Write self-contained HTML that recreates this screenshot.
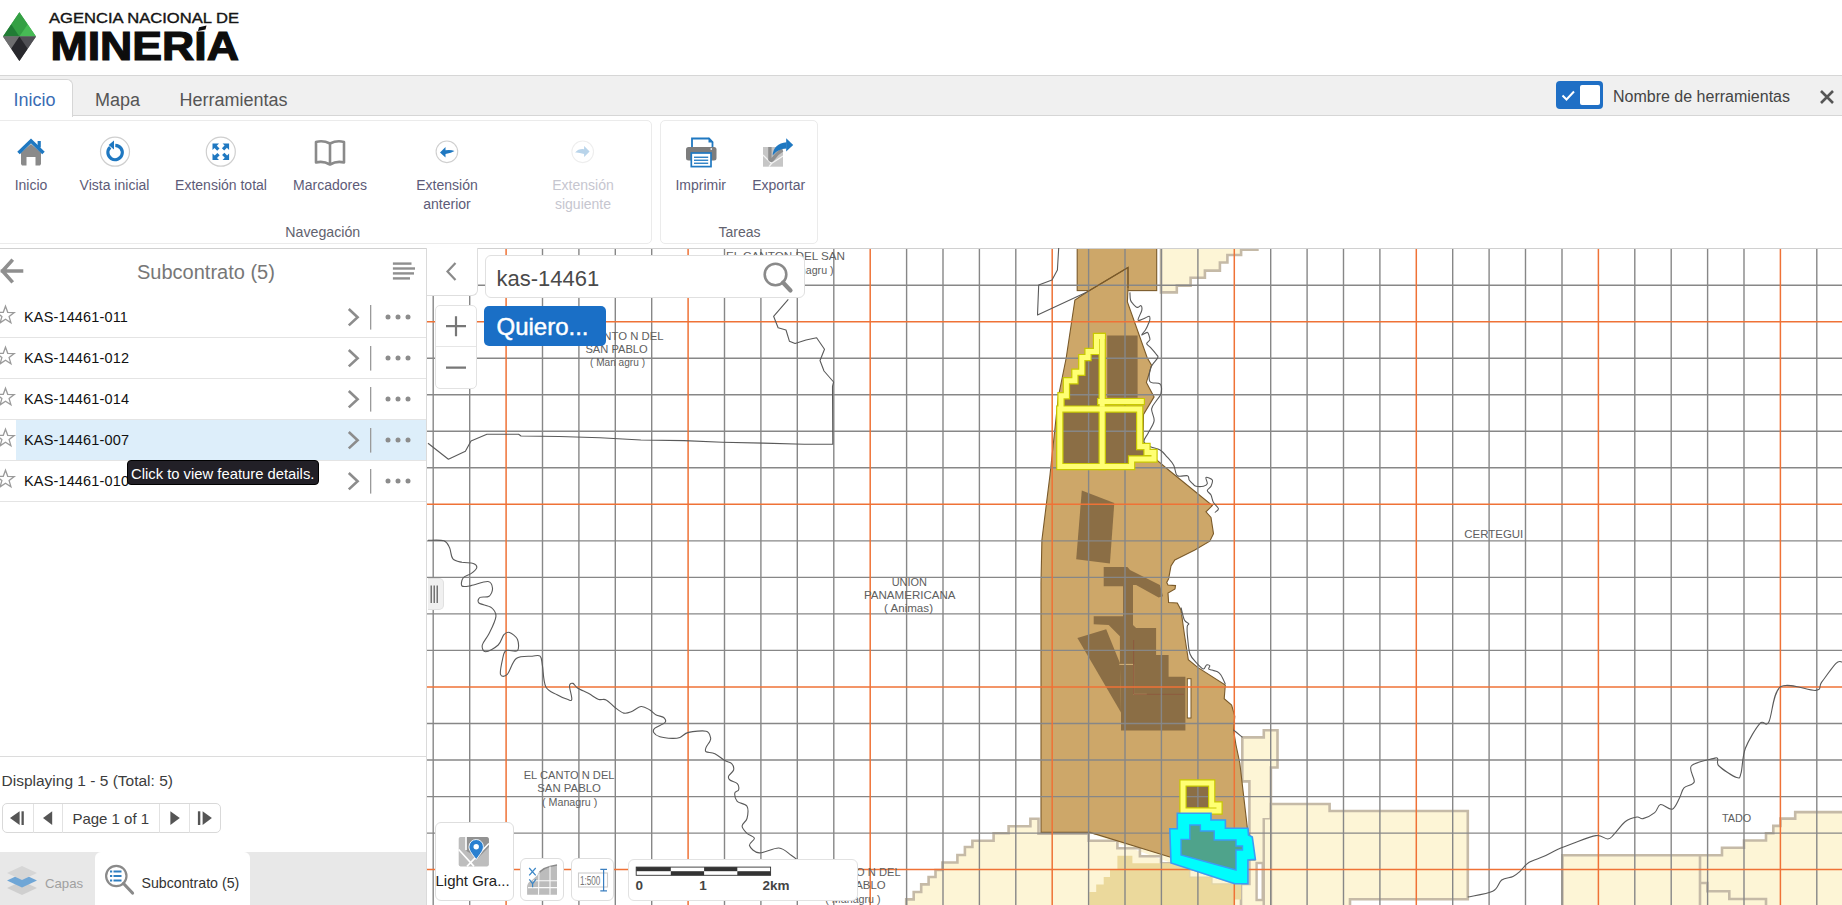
<!DOCTYPE html>
<html><head><meta charset="utf-8"><title>ANM</title>
<style>
*{box-sizing:border-box;margin:0;padding:0}
html,body{width:1842px;height:905px;overflow:hidden;background:#fff;font-family:"Liberation Sans",sans-serif;}
.abs{position:absolute}
.t{position:absolute;white-space:nowrap;line-height:1}
#tabbar{position:absolute;left:0;top:75px;width:1842px;height:41px;background:#f0f0f0;border-top:1px solid #d6d6d6;border-bottom:1px solid #d6d6d6}
.grp{position:absolute;top:120px;height:124px;border:1px solid #ebebeb;border-radius:5px;background:#fff}
.rl{position:absolute;white-space:nowrap;line-height:18px;font-size:14px;color:#5b5a72;text-align:center}
.row{position:absolute;left:0;width:426px;height:41px;border-bottom:1px solid #e6e6e6}
.kas{position:absolute;left:24px;top:12px;font-size:14.5px;color:#111;line-height:1;white-space:nowrap}
.wid{position:absolute;background:#fff;border:1px solid #dcdcdc;border-radius:6px}
</style></head><body>

<svg class="abs" style="left:0;top:0" width="260" height="75" viewBox="0 0 260 75">
<polygon points="19.4,12.2 3,36.4 36,36.4" fill="#36a346"/>
<polygon points="19.4,12.2 11.2,24.3 19.4,36.4 27.7,24.3" fill="#34a044"/>
<polygon points="3,36.4 11.2,24.3 19.4,36.4" fill="#217c35"/>
<polygon points="27.7,24.3 36,36.4 19.4,36.4" fill="#47bb55"/>
<polygon points="3,36.4 36,36.4 19.4,61" fill="#5a5a5a"/>
<polygon points="3,36.4 19.4,36.4 11.2,48.7" fill="#6e6e70"/>
<polygon points="19.4,36.4 36,36.4 27.7,48.7" fill="#4f4f54"/>
<polygon points="19.4,36.4 27.7,48.7 19.4,61 11.2,48.7" fill="#28282d"/>
<text x="49" y="22.8" font-family="Liberation Sans" font-weight="normal" font-size="14" fill="#141414" stroke="#141414" stroke-width="0.35" textLength="190" lengthAdjust="spacingAndGlyphs">AGENCIA NACIONAL DE</text>
<text x="50.5" y="60.4" font-family="Liberation Sans" font-weight="bold" font-size="40" fill="#0d0d0d" stroke="#0d0d0d" stroke-width="1.2" textLength="188.5" lengthAdjust="spacingAndGlyphs">MINERIA</text>
<polygon points="199,27.2 206.5,25.6 205.5,29.6 198,31" fill="#0d0d0d"/>
</svg>
<div id="tabbar"></div>
<div class="abs" style="left:0;top:79px;width:73px;height:38px;background:#fff;border-top:1px solid #d6d6d6;border-right:1px solid #d6d6d6;border-top-right-radius:6px"></div>
<div class="t" style="left:13.5px;top:91.3px;font-size:18px;color:#3a6cb4;font-weight:400;">Inicio</div>
<div class="t" style="left:95.0px;top:91.3px;font-size:18px;color:#555;font-weight:400;">Mapa</div>
<div class="t" style="left:179.5px;top:91.3px;font-size:18px;color:#555;font-weight:400;">Herramientas</div>
<div class="abs" style="left:1556px;top:81px;width:47px;height:28px;background:#1f6fc5;border-radius:4px"></div>
<div class="abs" style="left:1580px;top:85px;width:20px;height:20px;background:#fff;border-radius:2px"></div>
<svg class="abs" style="left:1556px;top:81px" width="26" height="28"><polyline points="6.5,14.5 10.5,18.5 18,10.5" fill="none" stroke="#fff" stroke-width="2"/></svg>
<div class="t" style="left:1613.0px;top:88.5px;font-size:16px;color:#444;font-weight:400;">Nombre de herramientas</div>
<svg class="abs" style="left:1818px;top:88px" width="18" height="18"><path d="M3,3 L15,15 M15,3 L3,15" stroke="#555" stroke-width="2.6"/></svg>
<div class="grp" style="left:-5px;width:657px"></div>
<div class="grp" style="left:660px;width:158px"></div>
<div class="abs" style="left:0;top:248px;width:1842px;height:1px;background:#d0d0d0"></div>
<svg class="abs" style="left:0;top:120px" width="830" height="60" viewBox="0 120 830 60">
<polygon points="21,152.5 31,144 41,152.5 41,164 40,165.5 35.5,165.5 35.5,157 26.5,157 26.5,165.5 22,165.5 21,164" fill="#8a8a8a"/>
<polyline points="18.5,153 31,141 43.5,153" fill="none" stroke="#1f78c1" stroke-width="3.6" stroke-linejoin="miter"/>
<rect x="37.6" y="141" width="3.2" height="6.5" fill="#1f78c1"/>
<circle cx="115" cy="151.7" r="14.5" fill="#fff" stroke="#cfcfcf" stroke-width="1.2"/>
<path d="M 110.2,147.2 A 7.2,7.2 0 1 0 115.3,145.3" fill="none" stroke="#1f78c1" stroke-width="3.2"/>
<polygon points="114,140.5 114,149.5 108.6,145" fill="#1f78c1"/>
<circle cx="220.8" cy="151.7" r="14.5" fill="#fff" stroke="#cfcfcf" stroke-width="1.2"/>
<g fill="#1f78c1">
<polygon points="212.5,143.5 219,143.5 216.8,145.7 219.5,148.4 217.2,150.7 214.5,148 212.5,150"/>
<polygon points="229.1,143.5 229.1,150 226.9,147.8 224.2,150.5 221.9,148.2 224.6,145.5 222.6,143.5"/>
<polygon points="212.5,159.9 212.5,153.4 214.7,155.6 217.4,152.9 219.7,155.2 217,157.9 219,159.9"/>
<polygon points="229.1,159.9 222.6,159.9 224.8,157.7 222.1,155 224.4,152.7 227.1,155.4 229.1,153.4"/>
</g>
<path d="M316,142 L316,162.5 Q323,160.5 330,164.5 Q337,160.5 344,162.5 L344,142 Q337,140 330,143.5 Q323,140 316,142 Z M330,143.5 L330,164.5" fill="none" stroke="#8a8a8a" stroke-width="2.6" stroke-linejoin="round"/>
<circle cx="446.9" cy="151.8" r="10.8" fill="#fff" stroke="#cfcfcf" stroke-width="1.1"/>
<path d="M440,152.5 L445.5,147 L445.5,150.2 Q451,149.5 454.5,151 Q451.5,152.8 445.5,154 L445.5,157.5 Z" fill="#1f78c1"/>
<circle cx="582.7" cy="151.8" r="10.8" fill="#fff" stroke="#eeeeee" stroke-width="1.1"/>
<path d="M589.6,151.5 L584.1,146 L584.1,149.2 Q578.6,148.5 575.1,152.5 Q578.1,152 584.1,154 L584.1,157 Z" fill="#b9d4ea"/>
<!-- printer -->
<path d="M692,154 L692,138.5 L709,138.5 L712.5,142 L712.5,154" fill="none" stroke="#1f78c1" stroke-width="1.8"/>
<polygon points="708.5,137.6 713.4,142.5 708.5,142.5" fill="#1f78c1"/>
<rect x="686" y="147" width="30.5" height="13.5" rx="2.5" fill="#7d7d7d"/>
<rect x="691.3" y="153" width="19.7" height="13.6" fill="#fff" stroke="#1f78c1" stroke-width="1.7"/>
<rect x="694" y="156.6" width="14.2" height="1.3" fill="#1f78c1"/>
<rect x="694" y="159.6" width="14.2" height="1.3" fill="#1f78c1"/>
<rect x="694" y="162.6" width="14.2" height="1.3" fill="#1f78c1"/>
<path d="M710.5,149 l1.6,0 M711.3,148.2 l0,1.6" stroke="#fff" stroke-width="0.9"/>
<!-- export -->
<rect x="763" y="147" width="20" height="19.7" fill="#c6c6c6"/>
<path d="M763,155 L771.5,163.5 L783,156 M771.5,163.5 L769,166.7" stroke="#f4f4f4" stroke-width="1.3" fill="none"/>
<path d="M769.9,147 L769.9,159.5 Q771.5,161.5 773,159 Q777,153 782.5,150" stroke="#8f8f8f" stroke-width="3.4" fill="none"/>
<path d="M772.6,155.4 Q773.5,143.5 786.6,142.3 L786.6,148.6 Q777.5,149 772.6,155.4 Z" fill="#1f78c1"/>
<polygon points="786.2,138.2 793.2,145 786.2,151.6" fill="#1f78c1"/>
</svg>
<div class="t" style="left:-269.0px;width:600px;text-align:center;top:177.9px;font-size:14px;color:#5d5b78;font-weight:400;">Inicio</div>
<div class="t" style="left:-185.5px;width:600px;text-align:center;top:177.9px;font-size:14px;color:#5d5b78;font-weight:400;">Vista inicial</div>
<div class="t" style="left:-79.0px;width:600px;text-align:center;top:177.9px;font-size:14px;color:#5d5b78;font-weight:400;">Extensión total</div>
<div class="t" style="left:30.0px;width:600px;text-align:center;top:177.9px;font-size:14px;color:#5d5b78;font-weight:400;">Marcadores</div>
<div class="t" style="left:147.0px;width:600px;text-align:center;top:177.9px;font-size:14px;color:#5d5b78;font-weight:400;">Extensión</div>
<div class="t" style="left:147.0px;width:600px;text-align:center;top:196.9px;font-size:14px;color:#5d5b78;font-weight:400;">anterior</div>
<div class="t" style="left:283.0px;width:600px;text-align:center;top:177.9px;font-size:14px;color:#c6c6cf;font-weight:400;">Extensión</div>
<div class="t" style="left:283.0px;width:600px;text-align:center;top:196.9px;font-size:14px;color:#c6c6cf;font-weight:400;">siguiente</div>
<div class="t" style="left:400.7px;width:600px;text-align:center;top:177.9px;font-size:14px;color:#5d5b78;font-weight:400;">Imprimir</div>
<div class="t" style="left:478.7px;width:600px;text-align:center;top:177.9px;font-size:14px;color:#5d5b78;font-weight:400;">Exportar</div>
<div class="t" style="left:22.8px;width:600px;text-align:center;top:224.8px;font-size:14.2px;color:#62626e;font-weight:400;">Navegación</div>
<div class="t" style="left:439.5px;width:600px;text-align:center;top:224.9px;font-size:14px;color:#62626e;font-weight:400;">Tareas</div>
<div class="abs" style="left:426px;top:248px;width:1px;height:657px;background:#dadada"></div>
<svg class="abs" style="left:0;top:255px" width="30" height="32" viewBox="0 255 30 32"><path d="M2.5,271 L21.5,271 M11.5,261 L2.5,271 L11.5,281" fill="none" stroke="#8f8f8f" stroke-width="3.6" stroke-linecap="square"/></svg>
<div class="t" style="left:137.0px;top:261.8px;font-size:20px;color:#777;font-weight:400;">Subcontrato (5)</div>
<svg class="abs" style="left:390px;top:260px" width="30" height="22" viewBox="390 260 30 22" fill="#8f8f8f">
<rect x="392.9" y="262.4" width="18.6" height="2.4"/><rect x="392.9" y="267.3" width="22.1" height="2.4"/>
<rect x="392.9" y="272.2" width="21.1" height="2.4"/><rect x="392.9" y="277.2" width="17.1" height="2.4"/></svg>
<div class="abs" style="left:0;top:337.2px;width:426px;height:1px;background:#e4e4e4"></div>
<div class="t" style="left:24.0px;top:310.4px;font-size:14.5px;color:#111;font-weight:400;letter-spacing:0.15px">KAS-14461-011</div>
<svg class="abs" style="left:0;top:296.9px" width="426" height="40" viewBox="0 296.9 426 40">
<polygon points="5.50,306.10 7.73,312.23 14.25,312.46 9.11,316.47 10.91,322.74 5.50,319.10 0.09,322.74 1.89,316.47 -3.25,312.46 3.27,312.23" fill="none" stroke="#9a9a9a" stroke-width="1.3" stroke-linejoin="miter"/>
<polyline points="348.8,308.9 357.6,317.1 348.8,325.3" fill="none" stroke="#8c8c8c" stroke-width="2.6"/>
<rect x="370" y="304.9" width="1.3" height="24.6" fill="#9a9a9a"/>
<circle cx="388" cy="316.9" r="2.5" fill="#8c8c8c"/><circle cx="398" cy="316.9" r="2.5" fill="#8c8c8c"/><circle cx="408" cy="316.9" r="2.5" fill="#8c8c8c"/>
</svg>
<div class="abs" style="left:0;top:378.2px;width:426px;height:1px;background:#e4e4e4"></div>
<div class="t" style="left:24.0px;top:351.4px;font-size:14.5px;color:#111;font-weight:400;letter-spacing:0.15px">KAS-14461-012</div>
<svg class="abs" style="left:0;top:337.9px" width="426" height="40" viewBox="0 337.9 426 40">
<polygon points="5.50,347.10 7.73,353.23 14.25,353.46 9.11,357.47 10.91,363.74 5.50,360.10 0.09,363.74 1.89,357.47 -3.25,353.46 3.27,353.23" fill="none" stroke="#9a9a9a" stroke-width="1.3" stroke-linejoin="miter"/>
<polyline points="348.8,349.9 357.6,358.1 348.8,366.3" fill="none" stroke="#8c8c8c" stroke-width="2.6"/>
<rect x="370" y="345.9" width="1.3" height="24.6" fill="#9a9a9a"/>
<circle cx="388" cy="357.9" r="2.5" fill="#8c8c8c"/><circle cx="398" cy="357.9" r="2.5" fill="#8c8c8c"/><circle cx="408" cy="357.9" r="2.5" fill="#8c8c8c"/>
</svg>
<div class="abs" style="left:0;top:419.2px;width:426px;height:1px;background:#e4e4e4"></div>
<div class="t" style="left:24.0px;top:392.4px;font-size:14.5px;color:#111;font-weight:400;letter-spacing:0.15px">KAS-14461-014</div>
<svg class="abs" style="left:0;top:378.9px" width="426" height="40" viewBox="0 378.9 426 40">
<polygon points="5.50,388.10 7.73,394.23 14.25,394.46 9.11,398.47 10.91,404.74 5.50,401.10 0.09,404.74 1.89,398.47 -3.25,394.46 3.27,394.23" fill="none" stroke="#9a9a9a" stroke-width="1.3" stroke-linejoin="miter"/>
<polyline points="348.8,390.9 357.6,399.1 348.8,407.3" fill="none" stroke="#8c8c8c" stroke-width="2.6"/>
<rect x="370" y="386.9" width="1.3" height="24.6" fill="#9a9a9a"/>
<circle cx="388" cy="398.9" r="2.5" fill="#8c8c8c"/><circle cx="398" cy="398.9" r="2.5" fill="#8c8c8c"/><circle cx="408" cy="398.9" r="2.5" fill="#8c8c8c"/>
</svg>
<div class="abs" style="left:16px;top:420.2px;width:410px;height:40px;background:#ddeefa"></div>
<div class="abs" style="left:0;top:460.2px;width:426px;height:1px;background:#e4e4e4"></div>
<div class="t" style="left:24.0px;top:433.4px;font-size:14.5px;color:#111;font-weight:400;letter-spacing:0.15px">KAS-14461-007</div>
<svg class="abs" style="left:0;top:419.9px" width="426" height="40" viewBox="0 419.9 426 40">
<polygon points="5.50,429.10 7.73,435.23 14.25,435.46 9.11,439.47 10.91,445.74 5.50,442.10 0.09,445.74 1.89,439.47 -3.25,435.46 3.27,435.23" fill="none" stroke="#9a9a9a" stroke-width="1.3" stroke-linejoin="miter"/>
<polyline points="348.8,431.9 357.6,440.1 348.8,448.3" fill="none" stroke="#8c8c8c" stroke-width="2.6"/>
<rect x="370" y="427.9" width="1.3" height="24.6" fill="#9a9a9a"/>
<circle cx="388" cy="439.9" r="2.5" fill="#8c8c8c"/><circle cx="398" cy="439.9" r="2.5" fill="#8c8c8c"/><circle cx="408" cy="439.9" r="2.5" fill="#8c8c8c"/>
</svg>
<div class="abs" style="left:0;top:501.2px;width:426px;height:1px;background:#e4e4e4"></div>
<div class="t" style="left:24.0px;top:474.4px;font-size:14.5px;color:#111;font-weight:400;letter-spacing:0.15px">KAS-14461-010</div>
<svg class="abs" style="left:0;top:460.9px" width="426" height="40" viewBox="0 460.9 426 40">
<polygon points="5.50,470.10 7.73,476.23 14.25,476.46 9.11,480.47 10.91,486.74 5.50,483.10 0.09,486.74 1.89,480.47 -3.25,476.46 3.27,476.23" fill="none" stroke="#9a9a9a" stroke-width="1.3" stroke-linejoin="miter"/>
<polyline points="348.8,472.9 357.6,481.1 348.8,489.3" fill="none" stroke="#8c8c8c" stroke-width="2.6"/>
<rect x="370" y="468.9" width="1.3" height="24.6" fill="#9a9a9a"/>
<circle cx="388" cy="480.9" r="2.5" fill="#8c8c8c"/><circle cx="398" cy="480.9" r="2.5" fill="#8c8c8c"/><circle cx="408" cy="480.9" r="2.5" fill="#8c8c8c"/>
</svg>
<div class="abs" style="left:127px;top:459.8px;width:191.5px;height:25.4px;background:#222027;border-radius:4px;border:1px solid #000"></div>
<div class="t" style="left:131.0px;top:466.7px;font-size:14.8px;color:#fff;font-weight:400;">Click to view feature details.</div>
<div class="abs" style="left:0;top:756px;width:426px;height:1px;background:#dcdcdc"></div>
<div class="t" style="left:1.5px;top:772.9px;font-size:15.5px;color:#3c3c3c;font-weight:400;">Displaying 1 - 5 (Total: 5)</div>
<div class="abs" style="left:1.5px;top:802.7px;width:219px;height:30.8px;border:1px solid #d9d9d9;border-radius:5px;background:#fff"></div>
<div class="abs" style="left:32.7px;top:803.5px;width:1px;height:29.5px;background:#e2e2e2"></div>
<div class="abs" style="left:62.4px;top:803.5px;width:1px;height:29.5px;background:#e2e2e2"></div>
<div class="abs" style="left:158.6px;top:803.5px;width:1px;height:29.5px;background:#e2e2e2"></div>
<div class="abs" style="left:189.2px;top:803.5px;width:1px;height:29.5px;background:#e2e2e2"></div>
<div class="t" style="left:72.4px;top:811.3px;font-size:15px;color:#3c3c3c;font-weight:400;">Page 1 of 1</div>
<svg class="abs" style="left:0;top:800px" width="230" height="36" viewBox="0 800 230 36" fill="#555">
<polygon points="10,818.1 19.6,811.3 19.6,825"/><rect x="21.5" y="811.3" width="2.3" height="13.7"/>
<polygon points="43,818.1 52.2,811.3 52.2,825"/>
<polygon points="179.8,818.1 170.4,811.3 170.4,825"/>
<rect x="197.9" y="811.3" width="2.4" height="13.7"/><polygon points="211.9,818.1 202.6,811.3 202.6,825"/>
</svg>
<div class="abs" style="left:0;top:852px;width:426px;height:53px;background:#e8e8e8"></div>
<div class="abs" style="left:95px;top:852px;width:155px;height:60px;background:#fff;border-radius:6px 6px 0 0"></div>
<svg class="abs" style="left:0;top:860px" width="140" height="40" viewBox="0 860 140 40">
<polygon points="22,881 37,888 22,895 7,888" fill="#cfcfcf"/>
<polygon points="22,873.5 37,880.5 22,887.5 7,880.5" fill="#6fa6d6"/>
<polygon points="22,866 37,873 22,880 7,873" fill="#d6d6d6"/>
<circle cx="116.3" cy="876" r="10.2" fill="#fff" stroke="#8a8a8a" stroke-width="2.2"/>
<path d="M123.5,883.5 L132.5,893" stroke="#8a8a8a" stroke-width="3.2" stroke-linecap="round"/>
<g fill="#2f7fc1"><rect x="110" y="870.5" width="2.2" height="2"/><rect x="113.5" y="870.5" width="8" height="2"/>
<rect x="110" y="875" width="2.2" height="2"/><rect x="113.5" y="875" width="8" height="2"/>
<rect x="110" y="879.5" width="2.2" height="2"/><rect x="113.5" y="879.5" width="8" height="2"/></g>
</svg>
<div class="t" style="left:45.0px;top:876.8px;font-size:13.2px;color:#a0a0a0;font-weight:400;">Capas</div>
<div class="t" style="left:141.5px;top:876.0px;font-size:14.2px;color:#333;font-weight:400;">Subcontrato (5)</div>
<svg class="abs" style="left:427px;top:248px" width="1415" height="657" viewBox="427 248 1415 657">
<rect x="427" y="248" width="1415" height="657" fill="#fff"/>
<g fill="#fdf5d6" stroke="#c5baa7" stroke-width="2.6">
<polygon points="1161.0,240.0 1161.0,292.4 1176.8,292.4 1176.8,285.6 1190.6,285.6 1190.6,277.7 1204.9,277.7 1204.9,270.6 1219.9,270.6 1219.9,262.5 1227.4,262.5 1227.4,255.0 1241.1,255.0 1241.1,249.7 1257.4,249.7 1257.4,240.0"/>
<polygon points="1038.5,833.8 1038.5,818.8 1030.4,818.8 1030.4,826.3 1008.6,826.3 1008.6,833.2 993.6,833.2 993.6,840.7 972.4,840.7 972.4,847.0 964.9,847.0 964.9,855.0 957.4,855.0 957.4,862.5 942.4,862.5 942.4,870.0 935.5,870.0 935.5,877.0 928.6,877.0 928.6,884.4 921.2,884.4 921.2,892.0 913.7,892.0 913.7,899.4 906.2,899.4 906.2,912.0 1264.0,912.0 1264.0,833.8"/>
<polygon points="1242.3,737.4 1263.8,737.4 1263.8,730.2 1277.5,730.2 1277.5,767.5 1270.9,767.5 1270.9,819.3 1263.8,819.3 1263.8,912.0 1241.0,912.0 1241.0,884.0 1249.4,884.0 1249.4,781.4 1242.3,781.4"/>
<polygon points="1270.9,804.0 1329.6,804.0 1329.6,811.0 1467.8,811.0 1467.8,899.3 1350.0,899.3 1350.0,912.0 1270.9,912.0"/>
<polygon points="1562.4,855.2 1722.0,855.2 1722.0,847.8 1744.0,847.8 1744.0,840.5 1766.0,840.5 1766.0,833.2 1773.3,833.2 1773.3,825.9 1780.5,825.9 1780.5,818.6 1795.2,818.6 1795.2,812.1 1850.0,812.1 1850.0,912.0 1562.4,912.0"/>
</g>
<polyline points="1700.0,855.2 1700.0,912.0" fill="none" stroke="#c5baa7" stroke-width="2.6"/>
<polyline points="1700.0,883.0 1707.4,883.0 1707.4,891.2 1729.3,891.2 1729.3,899.0 1766.0,899.0 1766.0,912.0" fill="none" stroke="#c5baa7" stroke-width="2.6"/>
<rect x="1265" y="819.5" width="5" height="90" fill="#fdf5d6"/>
<rect x="1256.6" y="863" width="6.1" height="37" fill="#fff" stroke="#c5baa7" stroke-width="2.4"/>
<polygon points="1041.0,832.4 1088.7,832.4 1172.0,863.2 1161.0,863.2 1161.0,856.3 1139.9,856.3 1139.9,848.2 1117.4,848.2 1117.4,840.7 1088.7,840.7 1088.7,833.8" fill="#fff"/>
<polyline points="1041.0,833.8 1088.7,833.8 1088.7,840.7 1117.4,840.7 1117.4,848.2 1139.9,848.2 1139.9,856.3 1161.0,856.3 1161.0,863.2 1172.0,863.2" fill="none" stroke="#c5baa7" stroke-width="2.6"/>
<polygon points="1117.4,855.7 1132.4,855.7 1132.4,863.2 1175.0,863.2 1234.8,883.8 1241.0,883.8 1241.0,899.4 1235.0,899.4 1235.0,912.0 1089.3,912.0 1089.3,892.0 1096.2,892.0 1096.2,884.4 1103.7,884.4 1103.7,877.0 1110.0,877.0 1110.0,869.4 1117.4,869.4" fill="#ebd99c"/>
<polygon points="1171.0,863.0 1189.8,869.3 1189.8,877.0 1212.0,877.0 1212.0,883.9 1234.8,883.9" fill="#fdf5d6" stroke="#e0d3a8" stroke-width="1.2"/>
<rect x="1077.2" y="240" width="79.5" height="50.6" fill="#cda769" stroke="#7a5a2a" stroke-width="1.1"/>
<polygon points="1128.0,267.5 1128.0,288.0 1127.4,302.0 1147.3,358.0 1151.6,365.2 1146.4,382.4 1154.1,396.9 1143.5,414.4 1143.0,443.0 1157.2,460.4 1168.6,470.0 1212.3,505.6 1206.0,511.8 1211.0,517.4 1213.5,533.7 1209.8,541.2 1194.8,549.9 1179.8,557.4 1174.8,560.0 1171.0,566.0 1168.6,578.7 1166.7,582.5 1168.0,585.0 1175.5,585.6 1175.0,589.0 1168.0,593.0 1168.6,602.5 1177.3,603.0 1181.0,610.0 1184.5,635.0 1188.3,659.6 1197.7,667.4 1225.3,685.0 1224.2,698.7 1231.6,705.0 1234.8,716.2 1233.5,730.0 1236.0,745.0 1239.8,763.0 1247.3,827.4 1255.0,860.0 1169.8,857.0 1090.0,832.4 1041.0,832.4 1041.0,583.0 1041.9,540.0 1050.0,475.0 1058.3,397.0 1066.2,358.0 1074.9,300.0 1087.4,291.8" fill="#cda769" stroke="#7a5a2a" stroke-width="1.1"/>
<polygon points="1107.2,335.5 1137.6,335.5 1137.6,397.7 1107.2,397.7" fill="#8b6e45"/>
<polygon points="1081.8,490.6 1114.3,503.1 1109.9,563.6 1076.2,559.3" fill="#8b6e45"/>
<polygon points="1103.7,566.9 1127.4,566.9 1130.0,570.0 1159.9,585.0 1163.0,596.2 1158.6,597.5 1136.1,585.0 1133.0,585.0 1133.0,625.0 1136.1,628.0 1156.1,628.0 1156.1,655.0 1168.6,655.0 1168.6,676.8 1185.4,676.8 1185.4,730.5 1121.0,730.5 1121.0,712.4 1119.9,663.6 1119.9,636.2 1108.7,625.0 1093.7,624.3 1093.7,616.2 1123.0,616.2 1123.0,586.2 1103.7,586.2" fill="#8b6e45"/>
<polygon points="1077.4,638.0 1106.2,629.3 1119.9,663.0 1121.0,712.4" fill="#8b6e45"/>
<polygon points="1102.2,336.5 1096.5,336.5 1096.5,351.4 1088.0,351.4 1088.0,357.6 1081.8,357.6 1081.8,372.3 1074.9,372.3 1074.9,380.7 1066.4,380.7 1066.4,395.7 1061.0,395.7 1061.0,406.0 1102.2,406.0" fill="#8b6e45"/>
<polygon points="1059.8,409.1 1102.2,409.1 1102.2,466.6 1059.8,466.6" fill="#8b6e45"/>
<polygon points="1102.2,409.1 1139.7,409.1 1139.7,446.5 1147.0,446.5 1147.0,452.5 1154.0,452.5 1154.0,459.0 1131.6,459.0 1131.6,466.6 1102.2,466.6" fill="#8b6e45"/>
<polygon points="1183.0,783.0 1211.7,783.0 1211.7,805.0 1219.0,805.0 1219.0,811.0 1183.0,811.0" fill="#8b6e45"/>
<polyline points="1119.3,664.4 1133.6,664.4 1133.6,694.3 1146.8,694.3" fill="none" stroke="#d6b37a" stroke-width="1"/>
<polyline points="1133.6,640.0 1133.6,694.3 1184.0,694.3" fill="none" stroke="#8e5a3e" stroke-width="1"/>
<rect x="1187.3" y="678.7" width="3.7" height="39.3" fill="#fff" stroke="#7a5a2a" stroke-width="1"/>
<g stroke="#878787" stroke-width="1.4"><line x1="433.2" y1="248" x2="433.2" y2="905"/><line x1="469.7" y1="248" x2="469.7" y2="905"/><line x1="542.5" y1="248" x2="542.5" y2="905"/><line x1="578.9" y1="248" x2="578.9" y2="905"/><line x1="615.3" y1="248" x2="615.3" y2="905"/><line x1="651.7" y1="248" x2="651.7" y2="905"/><line x1="724.5" y1="248" x2="724.5" y2="905"/><line x1="760.9" y1="248" x2="760.9" y2="905"/><line x1="797.3" y1="248" x2="797.3" y2="905"/><line x1="833.8" y1="248" x2="833.8" y2="905"/><line x1="906.6" y1="248" x2="906.6" y2="905"/><line x1="943.0" y1="248" x2="943.0" y2="905"/><line x1="979.4" y1="248" x2="979.4" y2="905"/><line x1="1015.8" y1="248" x2="1015.8" y2="905"/><line x1="1088.6" y1="248" x2="1088.6" y2="905"/><line x1="1125.0" y1="248" x2="1125.0" y2="905"/><line x1="1161.4" y1="248" x2="1161.4" y2="905"/><line x1="1197.9" y1="248" x2="1197.9" y2="905"/><line x1="1270.7" y1="248" x2="1270.7" y2="905"/><line x1="1307.1" y1="248" x2="1307.1" y2="905"/><line x1="1343.5" y1="248" x2="1343.5" y2="905"/><line x1="1379.9" y1="248" x2="1379.9" y2="905"/><line x1="1452.7" y1="248" x2="1452.7" y2="905"/><line x1="1489.1" y1="248" x2="1489.1" y2="905"/><line x1="1525.5" y1="248" x2="1525.5" y2="905"/><line x1="1562.0" y1="248" x2="1562.0" y2="905"/><line x1="1634.8" y1="248" x2="1634.8" y2="905"/><line x1="1671.2" y1="248" x2="1671.2" y2="905"/><line x1="1707.6" y1="248" x2="1707.6" y2="905"/><line x1="1744.0" y1="248" x2="1744.0" y2="905"/><line x1="1816.8" y1="248" x2="1816.8" y2="905"/><line x1="427" y1="285.2" x2="1842" y2="285.2"/><line x1="427" y1="358.2" x2="1842" y2="358.2"/><line x1="427" y1="394.8" x2="1842" y2="394.8"/><line x1="427" y1="431.3" x2="1842" y2="431.3"/><line x1="427" y1="467.8" x2="1842" y2="467.8"/><line x1="427" y1="540.9" x2="1842" y2="540.9"/><line x1="427" y1="577.4" x2="1842" y2="577.4"/><line x1="427" y1="613.9" x2="1842" y2="613.9"/><line x1="427" y1="650.4" x2="1842" y2="650.4"/><line x1="427" y1="723.5" x2="1842" y2="723.5"/><line x1="427" y1="760.0" x2="1842" y2="760.0"/><line x1="427" y1="796.6" x2="1842" y2="796.6"/><line x1="427" y1="833.1" x2="1842" y2="833.1"/><line x1="427" y1="906.1" x2="1842" y2="906.1"/></g>
<g stroke="#ef7236" stroke-width="1.5"><line x1="506.1" y1="248" x2="506.1" y2="905"/><line x1="688.1" y1="248" x2="688.1" y2="905"/><line x1="870.2" y1="248" x2="870.2" y2="905"/><line x1="1052.2" y1="248" x2="1052.2" y2="905"/><line x1="1234.3" y1="248" x2="1234.3" y2="905"/><line x1="1416.3" y1="248" x2="1416.3" y2="905"/><line x1="1598.4" y1="248" x2="1598.4" y2="905"/><line x1="1780.4" y1="248" x2="1780.4" y2="905"/><line x1="427" y1="321.7" x2="1842" y2="321.7"/><line x1="427" y1="504.3" x2="1842" y2="504.3"/><line x1="427" y1="687.0" x2="1842" y2="687.0"/><line x1="427" y1="869.6" x2="1842" y2="869.6"/></g>
<rect x="427" y="248" width="1415" height="1" fill="#d0d0d0"/>
<g fill="none" stroke="#5a5a5a" stroke-width="1.1" stroke-linejoin="round">
<polyline points="1058.7,248.0 1057.4,270.0 1052.0,280.0 1038.7,285.0 1037.5,315.0 1087.0,292.0"/>
<path d="M1129.9,292.4 C1130.0,293.7 1130.0,298.1 1130.5,300.0 C1131.0,301.9 1131.8,302.5 1132.9,303.7 C1134.0,304.9 1136.0,307.1 1137.3,307.4 C1138.6,307.7 1140.3,305.1 1141.0,305.6 C1141.7,306.1 1142.2,308.2 1141.7,310.6 C1141.2,313.0 1137.7,318.6 1138.0,320.0 C1138.3,321.4 1141.7,319.3 1143.6,318.7 C1145.5,318.1 1148.2,316.0 1149.2,316.2 C1150.2,316.4 1150.0,318.5 1149.8,320.0 C1149.6,321.5 1148.6,323.3 1147.9,325.0 C1147.2,326.7 1146.4,328.4 1145.4,330.0 C1144.4,331.6 1141.4,334.5 1141.7,334.9 C1142.0,335.3 1146.0,332.2 1147.3,332.4 C1148.5,332.6 1148.8,334.9 1149.2,336.1 C1149.6,337.4 1150.2,338.6 1149.8,339.9 C1149.4,341.1 1146.6,342.4 1146.7,343.6 C1146.8,344.9 1148.7,345.5 1150.4,347.4 C1152.1,349.3 1155.5,353.1 1156.7,354.9 C1157.9,356.7 1158.6,355.9 1157.6,358.0 C1156.6,360.1 1152.0,363.9 1150.7,367.8 C1149.4,371.7 1148.3,378.8 1149.9,381.5 C1151.5,384.2 1158.2,382.0 1160.1,384.0 C1161.9,386.0 1161.6,390.8 1161.0,393.5 C1160.4,396.2 1158.3,397.7 1156.7,400.3 C1155.1,402.9 1152.0,405.5 1151.6,408.9 C1151.2,412.3 1154.7,416.9 1154.1,420.9 C1153.5,424.9 1149.9,429.5 1148.2,432.9 C1146.5,436.3 1143.6,439.1 1143.9,441.4 C1144.2,443.7 1147.2,445.2 1149.9,446.6 C1152.6,448.0 1157.2,448.3 1160.1,450.0 C1162.9,451.7 1164.7,454.2 1167.0,456.8 C1169.3,459.4 1172.1,462.2 1173.8,465.4 C1175.5,468.5 1175.0,474.0 1177.3,475.7 C1179.6,477.4 1185.5,475.0 1187.5,475.7 C1189.5,476.4 1188.3,478.6 1189.2,480.0 C1190.1,481.4 1191.9,483.0 1193.0,484.0 C1194.1,485.0 1194.2,485.8 1196.0,486.2 C1197.8,486.6 1201.6,486.6 1203.5,486.2 C1205.4,485.8 1206.9,485.1 1207.3,483.7 C1207.7,482.2 1205.2,478.1 1206.0,477.5 C1206.8,476.9 1211.5,478.6 1212.3,480.0 C1213.1,481.4 1211.8,484.4 1211.0,486.2 C1210.2,488.0 1207.3,489.1 1207.3,490.6 C1207.3,492.1 1210.0,493.0 1211.0,495.0 C1212.0,497.0 1212.2,500.2 1213.5,502.5 C1214.8,504.8 1218.3,507.0 1218.5,508.7 C1218.7,510.4 1215.4,511.9 1214.8,512.5"/>
<path d="M1181.1,607.7 C1181.6,609.8 1183.1,617.3 1184.4,620.0 C1185.7,622.7 1188.3,622.6 1188.8,623.7 C1189.3,624.8 1187.4,624.0 1187.2,626.5 C1187.0,629.0 1187.2,634.0 1187.7,638.6 C1188.2,643.2 1188.5,649.9 1190.0,654.0 C1191.5,658.1 1194.4,660.5 1196.6,663.0 C1198.8,665.5 1201.5,668.6 1203.2,669.0 C1204.9,669.4 1205.4,665.6 1206.5,665.1 C1207.6,664.6 1209.4,665.1 1209.8,665.7 C1210.2,666.4 1208.3,668.3 1208.7,669.0 C1209.1,669.7 1210.5,669.6 1212.0,670.1 C1213.5,670.6 1216.0,671.0 1217.5,671.8 C1219.0,672.6 1219.6,673.0 1220.9,675.0 C1222.2,677.0 1224.6,682.4 1225.3,683.9"/>
<path d="M1188.0,660.0 C1188.0,660.0 1188.0,660.0 1188.0,660.0"/>
<path d="M1233.5,730.0 C1233.9,730.3 1234.2,730.5 1235.7,731.7 C1237.2,732.9 1241.4,736.5 1242.5,737.4"/>
<path d="M428.0,540.3 C430.6,540.4 440.3,539.6 443.9,540.8 C447.5,542.0 448.0,544.6 449.5,547.6 C451.0,550.6 450.8,556.5 452.9,558.9 C455.0,561.3 458.6,561.5 462.0,562.3 C465.4,563.0 470.9,562.5 473.3,563.4 C475.8,564.3 477.1,566.2 476.7,567.9 C476.3,569.6 473.3,571.9 471.0,573.6 C468.7,575.3 464.6,575.9 463.1,578.0 C461.6,580.1 460.7,584.7 462.0,586.0 C463.3,587.3 466.7,586.4 471.0,585.6 C475.3,584.9 484.4,581.0 488.0,581.5 C491.6,582.0 492.3,585.8 492.5,588.3 C492.7,590.8 491.2,594.7 489.1,596.2 C487.0,597.7 481.8,596.3 480.1,597.4 C478.4,598.5 477.1,601.3 479.0,603.0 C480.9,604.7 488.6,605.3 491.4,607.6 C494.2,609.9 496.3,612.3 495.9,616.6 C495.5,620.9 491.4,628.9 489.1,633.6 C486.8,638.3 482.9,642.0 482.3,645.0 C481.7,648.0 483.1,651.7 485.7,651.7 C488.3,651.7 495.2,647.8 498.2,645.0 C501.2,642.2 502.0,636.8 503.9,634.7 C505.8,632.6 507.2,631.7 509.5,632.5 C511.8,633.3 516.1,636.3 517.4,639.3 C518.7,642.3 519.3,648.7 517.4,650.6 C515.5,652.5 508.6,649.3 506.1,650.6 C503.7,651.9 503.6,654.5 502.7,658.5 C501.8,662.5 499.7,671.8 500.5,674.4 C501.3,677.0 504.7,677.0 507.3,674.4 C509.9,671.8 512.1,661.5 516.3,658.5 C520.4,655.5 528.2,656.6 532.2,656.2 C536.2,655.8 538.4,654.7 540.1,656.2 C541.8,657.7 541.5,660.2 542.4,665.3 C543.3,670.4 543.3,681.9 545.8,686.8 C548.2,691.7 553.5,692.6 557.1,694.7 C560.7,696.8 564.8,698.5 567.3,699.3 C569.8,700.1 571.4,701.6 571.8,699.3 C572.2,697.0 569.3,688.4 569.5,685.7 C569.7,683.1 571.7,683.0 573.0,683.4 C574.3,683.8 574.9,686.3 577.5,688.0 C580.1,689.7 585.3,691.7 588.8,693.6 C592.3,695.5 595.8,698.4 598.7,699.4 C601.6,700.4 603.5,698.5 606.2,699.9 C608.9,701.2 612.1,705.3 615.0,707.5 C617.9,709.7 621.0,712.4 623.7,713.1 C626.4,713.8 628.3,712.9 631.2,711.8 C634.1,710.7 638.1,706.8 641.2,706.5 C644.3,706.2 647.4,708.6 649.9,710.0 C652.4,711.4 653.9,713.8 656.2,715.0 C658.5,716.2 662.2,716.2 663.7,717.5 C665.2,718.8 666.5,720.7 665.0,722.5 C663.5,724.3 656.8,726.5 654.9,728.1 C653.0,729.8 652.9,731.0 653.7,732.4 C654.5,733.8 656.8,735.8 659.9,736.8 C663.0,737.8 669.1,738.3 672.4,738.4 C675.7,738.5 677.2,738.4 679.9,737.4 C682.6,736.4 684.2,733.4 688.6,732.4 C693.0,731.4 702.5,730.4 706.1,731.2 C709.8,732.0 709.9,735.7 710.5,737.4 C711.1,739.1 710.6,739.5 709.9,741.2 C709.2,742.9 706.7,745.6 706.1,747.4 C705.5,749.2 704.6,750.8 706.1,751.8 C707.6,752.8 711.8,752.2 714.9,753.7 C718.0,755.2 722.0,758.8 724.8,760.5 C727.6,762.2 730.2,762.1 731.7,763.7 C733.2,765.3 734.1,767.9 733.6,770.0 C733.1,772.1 729.2,774.4 728.6,776.1 C728.0,777.8 728.5,778.8 729.9,780.0 C731.3,781.2 735.8,782.0 737.3,783.6 C738.8,785.2 739.0,788.2 738.6,789.8 C738.2,791.4 735.0,791.1 734.8,793.0 C734.6,794.9 735.2,799.1 737.2,801.3 C739.2,803.5 745.4,803.4 747.0,806.3 C748.6,809.2 747.8,815.2 747.0,818.5 C746.2,821.8 742.1,823.4 742.1,825.9 C742.1,828.4 745.0,831.2 747.0,833.3 C749.0,835.3 754.0,836.2 754.4,838.2 C754.8,840.2 748.7,843.0 749.5,845.5 C750.3,848.0 754.4,852.5 759.3,852.9 C764.2,853.3 773.6,847.6 778.9,848.0 C784.2,848.4 787.7,853.0 791.2,855.3 C794.7,857.6 798.5,860.9 800.0,862.0"/>
<polyline points="428.0,443.3 448.4,459.2 465.4,451.2 471.0,441.0 486.9,434.3 518.6,434.3 521.0,436.0 559.3,436.5 600.0,437.7 640.9,440.0 683.9,440.6 722.4,442.2 763.4,443.1 804.2,444.3 832.8,444.3 832.5,386.5 833.6,382.0 824.0,371.0 820.0,360.5 824.5,349.2 816.6,337.8 806.0,340.0 795.1,343.5 789.4,341.2 786.0,330.0 778.1,327.7 773.6,316.3 788.3,299.3"/>
<path d="M1467.8,897.0 C1472.0,896.0 1487.0,894.1 1492.7,891.3 C1498.4,888.5 1498.3,882.5 1501.7,880.0 C1505.1,877.5 1510.0,878.1 1513.0,876.6 C1516.0,875.1 1517.4,873.6 1520.0,871.3 C1522.6,868.9 1524.9,865.0 1528.8,862.5 C1532.7,860.0 1538.5,858.8 1543.4,856.6 C1548.3,854.4 1553.1,851.5 1558.0,849.3 C1562.9,847.1 1566.4,845.8 1572.7,843.5 C1579.0,841.2 1590.2,836.4 1596.0,835.6 C1601.8,834.9 1604.8,839.1 1607.8,839.0 C1610.8,838.9 1610.8,837.6 1613.7,834.7 C1616.6,831.8 1621.5,824.5 1625.4,821.5 C1629.3,818.5 1634.1,817.5 1637.0,817.0 C1639.9,816.5 1640.0,819.3 1643.0,818.6 C1646.0,817.9 1651.8,815.1 1654.7,812.7 C1657.6,810.4 1657.6,805.1 1660.5,804.5 C1663.4,803.9 1669.0,810.3 1672.2,809.2 C1675.4,808.1 1677.5,801.6 1679.5,798.0 C1681.5,794.4 1681.5,790.5 1684.0,787.8 C1686.5,785.1 1693.0,785.6 1694.2,782.0 C1695.4,778.4 1688.1,769.9 1691.3,766.0 C1694.5,762.1 1708.8,759.8 1713.2,758.6 C1717.6,757.4 1716.6,757.4 1717.6,758.6 C1718.6,759.8 1715.8,762.8 1719.0,766.0 C1722.2,769.2 1732.9,776.4 1736.6,777.6 C1740.3,778.8 1739.5,778.1 1741.0,773.2 C1742.5,768.3 1742.2,756.6 1745.4,748.3 C1748.6,740.0 1756.1,727.8 1760.0,723.4 C1763.9,719.0 1765.4,728.1 1768.8,722.0 C1772.2,715.9 1772.7,692.1 1780.5,686.8 C1788.3,681.5 1808.9,691.1 1815.7,690.4 C1822.5,689.7 1818.1,686.9 1821.5,682.4 C1824.9,677.9 1832.6,666.8 1836.0,663.4 C1839.4,660.0 1841.0,662.2 1842.0,662.0"/>
</g>
<polyline points="1087.4,291.8 1128.0,267.5 1128.0,288.0" fill="none" stroke="#7a5a2a" stroke-width="1.1"/>
<polyline points="1102.2,336.5 1096.5,336.5 1096.5,351.4 1088.0,351.4 1088.0,357.6 1081.8,357.6 1081.8,372.3 1074.9,372.3 1074.9,380.7 1066.4,380.7 1066.4,395.7 1061.0,395.7 1061.0,406.0" fill="none" stroke="#c9c900" stroke-width="7.4" stroke-linejoin="miter" stroke-linecap="square"/>
<polyline points="1102.2,336.5 1102.2,404.0" fill="none" stroke="#c9c900" stroke-width="7.4" stroke-linejoin="miter" stroke-linecap="square"/>
<polyline points="1100.7,401.6 1141.3,401.6" fill="none" stroke="#c9c900" stroke-width="7.4" stroke-linejoin="miter" stroke-linecap="square"/>
<polyline points="1059.8,409.1 1102.2,409.1 1102.2,466.6 1059.8,466.6 1059.8,409.1" fill="none" stroke="#c9c900" stroke-width="7.4" stroke-linejoin="miter" stroke-linecap="square"/>
<polyline points="1102.2,409.1 1139.7,409.1 1139.7,446.5 1147.0,446.5 1147.0,452.5 1154.0,452.5 1154.0,459.0 1131.6,459.0 1131.6,466.6 1102.2,466.6" fill="none" stroke="#c9c900" stroke-width="7.4" stroke-linejoin="miter" stroke-linecap="square"/>
<polyline points="1183.0,783.0 1211.7,783.0 1211.7,805.0 1219.0,805.0 1219.0,811.0 1183.0,811.0 1183.0,783.0" fill="none" stroke="#c9c900" stroke-width="7.4" stroke-linejoin="miter" stroke-linecap="square"/>
<polyline points="1102.2,336.5 1096.5,336.5 1096.5,351.4 1088.0,351.4 1088.0,357.6 1081.8,357.6 1081.8,372.3 1074.9,372.3 1074.9,380.7 1066.4,380.7 1066.4,395.7 1061.0,395.7 1061.0,406.0" fill="none" stroke="#ffff73" stroke-width="5.0" stroke-linejoin="miter" stroke-linecap="square"/>
<polyline points="1102.2,336.5 1102.2,404.0" fill="none" stroke="#ffff73" stroke-width="5.0" stroke-linejoin="miter" stroke-linecap="square"/>
<polyline points="1100.7,401.6 1141.3,401.6" fill="none" stroke="#ffff73" stroke-width="5.0" stroke-linejoin="miter" stroke-linecap="square"/>
<polyline points="1059.8,409.1 1102.2,409.1 1102.2,466.6 1059.8,466.6 1059.8,409.1" fill="none" stroke="#ffff73" stroke-width="5.0" stroke-linejoin="miter" stroke-linecap="square"/>
<polyline points="1102.2,409.1 1139.7,409.1 1139.7,446.5 1147.0,446.5 1147.0,452.5 1154.0,452.5 1154.0,459.0 1131.6,459.0 1131.6,466.6 1102.2,466.6" fill="none" stroke="#ffff73" stroke-width="5.0" stroke-linejoin="miter" stroke-linecap="square"/>
<polyline points="1183.0,783.0 1211.7,783.0 1211.7,805.0 1219.0,805.0 1219.0,811.0 1183.0,811.0 1183.0,783.0" fill="none" stroke="#ffff73" stroke-width="5.0" stroke-linejoin="miter" stroke-linecap="square"/>
<polygon points="1177.3,813.2 1211.0,813.2 1211.0,820.0 1225.4,820.0 1225.4,828.2 1247.9,828.2 1248.5,835.0 1252.3,837.0 1255.4,859.4 1247.9,860.0 1247.9,883.8 1234.8,883.8 1171.0,863.0 1169.8,828.8 1177.3,828.8" fill="#00fdfd" stroke="#3a9cf5" stroke-width="1.6"/>
<polygon points="1189.8,825.0 1200.4,825.0 1200.4,831.0 1214.2,831.0 1214.2,840.0 1236.0,840.0 1236.0,846.0 1242.5,846.0 1242.5,850.0 1236.0,850.0 1236.0,870.0 1181.0,855.0 1181.0,839.4 1189.8,839.4" fill="#4fa38b" stroke="#3a9cf5" stroke-width="1.4"/>
<text x="726" y="259.7" font-family="Liberation Sans" font-size="11.5" fill="#606060" textLength="119.0" lengthAdjust="spacingAndGlyphs">EL CANTON DEL SAN</text>
<text x="778.5" y="274.4" font-family="Liberation Sans" font-size="11.5" fill="#606060" textLength="55.1" lengthAdjust="spacingAndGlyphs">( Managru )</text>
<text x="571" y="340" font-family="Liberation Sans" font-size="11.5" fill="#606060" textLength="92.5" lengthAdjust="spacingAndGlyphs">EL CANTO N DEL</text>
<text x="585.4" y="352.7" font-family="Liberation Sans" font-size="11.5" fill="#606060" textLength="62.3" lengthAdjust="spacingAndGlyphs">SAN  PABLO</text>
<text x="590" y="366.3" font-family="Liberation Sans" font-size="11.5" fill="#606060" textLength="55.0" lengthAdjust="spacingAndGlyphs">( Man agru )</text>
<text x="891.7" y="586.2" font-family="Liberation Sans" font-size="11.5" fill="#606060" textLength="35.3" lengthAdjust="spacingAndGlyphs">UNION</text>
<text x="864" y="598.8" font-family="Liberation Sans" font-size="11.5" fill="#606060" textLength="91.5" lengthAdjust="spacingAndGlyphs">PANAMERICANA</text>
<text x="884" y="612.4" font-family="Liberation Sans" font-size="11.5" fill="#606060" textLength="49.0" lengthAdjust="spacingAndGlyphs">( Animas)</text>
<text x="1464.2" y="537.8" font-family="Liberation Sans" font-size="11.5" fill="#606060" textLength="59.1" lengthAdjust="spacingAndGlyphs">CERTEGUI</text>
<text x="523.7" y="778.8" font-family="Liberation Sans" font-size="11.5" fill="#606060" textLength="90.8" lengthAdjust="spacingAndGlyphs">EL CANTO N DEL</text>
<text x="537.2" y="792.3" font-family="Liberation Sans" font-size="11.5" fill="#606060" textLength="63.8" lengthAdjust="spacingAndGlyphs">SAN PABLO</text>
<text x="542" y="805.8" font-family="Liberation Sans" font-size="11.5" fill="#606060" textLength="55.3" lengthAdjust="spacingAndGlyphs">( Managru )</text>
<text x="1722" y="822" font-family="Liberation Sans" font-size="11.5" fill="#606060" textLength="29.3" lengthAdjust="spacingAndGlyphs">TADO</text>
<text x="809.8" y="876.3" font-family="Liberation Sans" font-size="11.5" fill="#606060" textLength="90.8" lengthAdjust="spacingAndGlyphs">EL CANTO N DEL</text>
<text x="821.8" y="889.4" font-family="Liberation Sans" font-size="11.5" fill="#606060" textLength="63.8" lengthAdjust="spacingAndGlyphs">SAN PABLO</text>
<text x="825.3" y="902.5" font-family="Liberation Sans" font-size="11.5" fill="#606060" textLength="55.3" lengthAdjust="spacingAndGlyphs">( Managru )</text>
</svg>
<div class="abs" style="left:427px;top:248px;width:50.5px;height:47.5px;background:#fff;border-bottom:1px solid #dedede;border-right:1px solid #dedede;border-bottom-right-radius:6px"></div>
<svg class="abs" style="left:440px;top:260px" width="24" height="24"><polyline points="15.5,3 7.5,11.5 15.5,20" fill="none" stroke="#8a8a8a" stroke-width="2.2"/></svg>
<div class="wid" style="left:484.5px;top:255.3px;width:320px;height:43.2px;border-color:#e0e0e0;border-radius:6px"></div>
<div class="t" style="left:496.5px;top:267.8px;font-size:22px;color:#4a4a4a;font-weight:400;">kas-14461</div>
<svg class="abs" style="left:756px;top:258px" width="40" height="40" viewBox="756 258 40 40"><circle cx="775.5" cy="274.5" r="10.8" fill="none" stroke="#8a8a8a" stroke-width="2.6"/><path d="M783,282.5 L790.5,290.5" stroke="#8a8a8a" stroke-width="4.2" stroke-linecap="round"/></svg>
<div class="abs" style="left:484.3px;top:306.3px;width:121.3px;height:39.4px;background:#1a6fc6;border-radius:5px"></div>
<div class="t" style="left:496.5px;top:315.0px;font-size:24px;color:#fff;font-weight:400;-webkit-text-stroke:0.45px #fff">Quiero...</div>
<div class="wid" style="left:434.6px;top:304.7px;width:42.8px;height:84.5px;border-color:#e2e2e2;border-radius:5px"></div>
<div class="abs" style="left:435.6px;top:346.4px;width:40.8px;height:1px;background:#e6e6e6"></div>
<svg class="abs" style="left:434px;top:304px" width="44" height="86" viewBox="434 304 44 86"><path d="M446,326.2 L466,326.2 M456,316.2 L456,336.2 M446,367.6 L466,367.6" stroke="#777" stroke-width="2.2"/></svg>
<div class="abs" style="left:427.5px;top:578.3px;width:16px;height:31.4px;background:#f0f0f0;border:1px solid #e0e0e0;border-left:none;border-radius:0 5px 5px 0"></div>
<svg class="abs" style="left:428px;top:582px" width="14" height="24"><path d="M3.2,3.5 V21 M6.2,3.5 V21 M9.2,3.5 V21" stroke="#555" stroke-width="1.2"/></svg>
<div class="wid" style="left:434.5px;top:822.3px;width:79.3px;height:78.9px;border-color:#dedede"></div>
<svg class="abs" style="left:456px;top:835px" width="36" height="34" viewBox="456 835 36 34">
<rect x="458.7" y="837" width="30.2" height="29.4" rx="1.8" fill="#bdbdbd"/>
<polygon points="466.5,837 487.2,837 488.9,838.8 488.9,847 478,858 466.5,851" fill="#929292"/>
<path d="M458.7,849.5 L474,866.4 M488.9,843.5 L467,866.4 M466,837 L466,850" stroke="#fff" stroke-width="1.6"/>
<path d="M476.2,859.5 C470.5,852 469,849.8 469,846.7 A7.2,7.2 0 0 1 483.4,846.7 C483.4,849.8 481.9,852 476.2,859.5 Z" fill="#2a80d0" stroke="#fff" stroke-width="0.9"/>
<circle cx="476.2" cy="846.7" r="2.7" fill="#fff"/>
</svg>
<div class="t" style="left:435.5px;top:873.3px;font-size:15px;color:#222;font-weight:400;">Light Gra...</div>
<div class="wid" style="left:520.2px;top:858.4px;width:43.4px;height:43px;border-color:#dedede"></div>
<svg class="abs" style="left:520px;top:858px" width="44" height="46" viewBox="520 858 44 46">
<path d="M527.1,894.8 L527.1,886 Q528,882 531,881 L538.2,874.5 Q542,867 557,865 L557,894.8 Z" fill="#bcbcbc"/>
<path d="M538.2,874.5 Q542,867 557,865" stroke="#8a8a8a" stroke-width="1.4" fill="none"/>
<path d="M533,880.7 L557,880.7 M528,887.6 L557,887.6 M539,872 L538.5,894.8 M550,866.5 L550,894.8" stroke="#fafafa" stroke-width="1.1"/>
<path d="M529.2,868 L535.7,875.4 M535.7,868 L529.2,875.4 M529.3,879.3 L532.6,883.7 L535.9,879.3 M532.6,883.7 L532.6,887.2" stroke="#3b86c6" stroke-width="1.2" fill="none"/>
</svg>
<div class="wid" style="left:571.3px;top:858.4px;width:42.8px;height:43px;border-color:#dedede"></div>
<svg class="abs" style="left:571px;top:858px" width="44" height="46" viewBox="571 858 44 46">
<rect x="578.5" y="873" width="29" height="14" fill="#fff" stroke="#cccccc" stroke-width="1.1"/>
<text x="579.9" y="884.8" font-family="Liberation Sans" font-size="12" fill="#777" textLength="20.4" lengthAdjust="spacingAndGlyphs">1:500</text>
<path d="M600.3,869.4 L607,869.4 M603.6,869.4 L603.6,890.9 M600.3,890.9 L607,890.9" stroke="#3b7fc0" stroke-width="1.2" fill="none"/>
</svg>
<div class="wid" style="left:628px;top:858.6px;width:230px;height:42.7px;border-color:#e2e2e2"></div>
<svg class="abs" style="left:630px;top:862px" width="150" height="18" viewBox="630 862 150 18">
<rect x="636.2" y="867.1" width="134.4" height="8.2" fill="#fff" stroke="#333" stroke-width="0.9"/>
<rect x="636.2" y="867.1" width="34.6" height="4.1" fill="#333"/><rect x="704.1" y="867.1" width="33.2" height="4.1" fill="#333"/>
<rect x="670.8" y="871.2" width="33.3" height="4.1" fill="#333"/><rect x="737.3" y="871.2" width="33.3" height="4.1" fill="#333"/>
</svg>
<div class="t" style="left:635.5px;top:878.5px;font-size:13.5px;color:#444;font-weight:700;">0</div>
<div class="t" style="left:403.0px;width:600px;text-align:center;top:878.5px;font-size:13.5px;color:#444;font-weight:700;">1</div>
<div class="t" style="left:762.5px;top:878.5px;font-size:13.5px;color:#444;font-weight:700;">2km</div>
</body></html>
